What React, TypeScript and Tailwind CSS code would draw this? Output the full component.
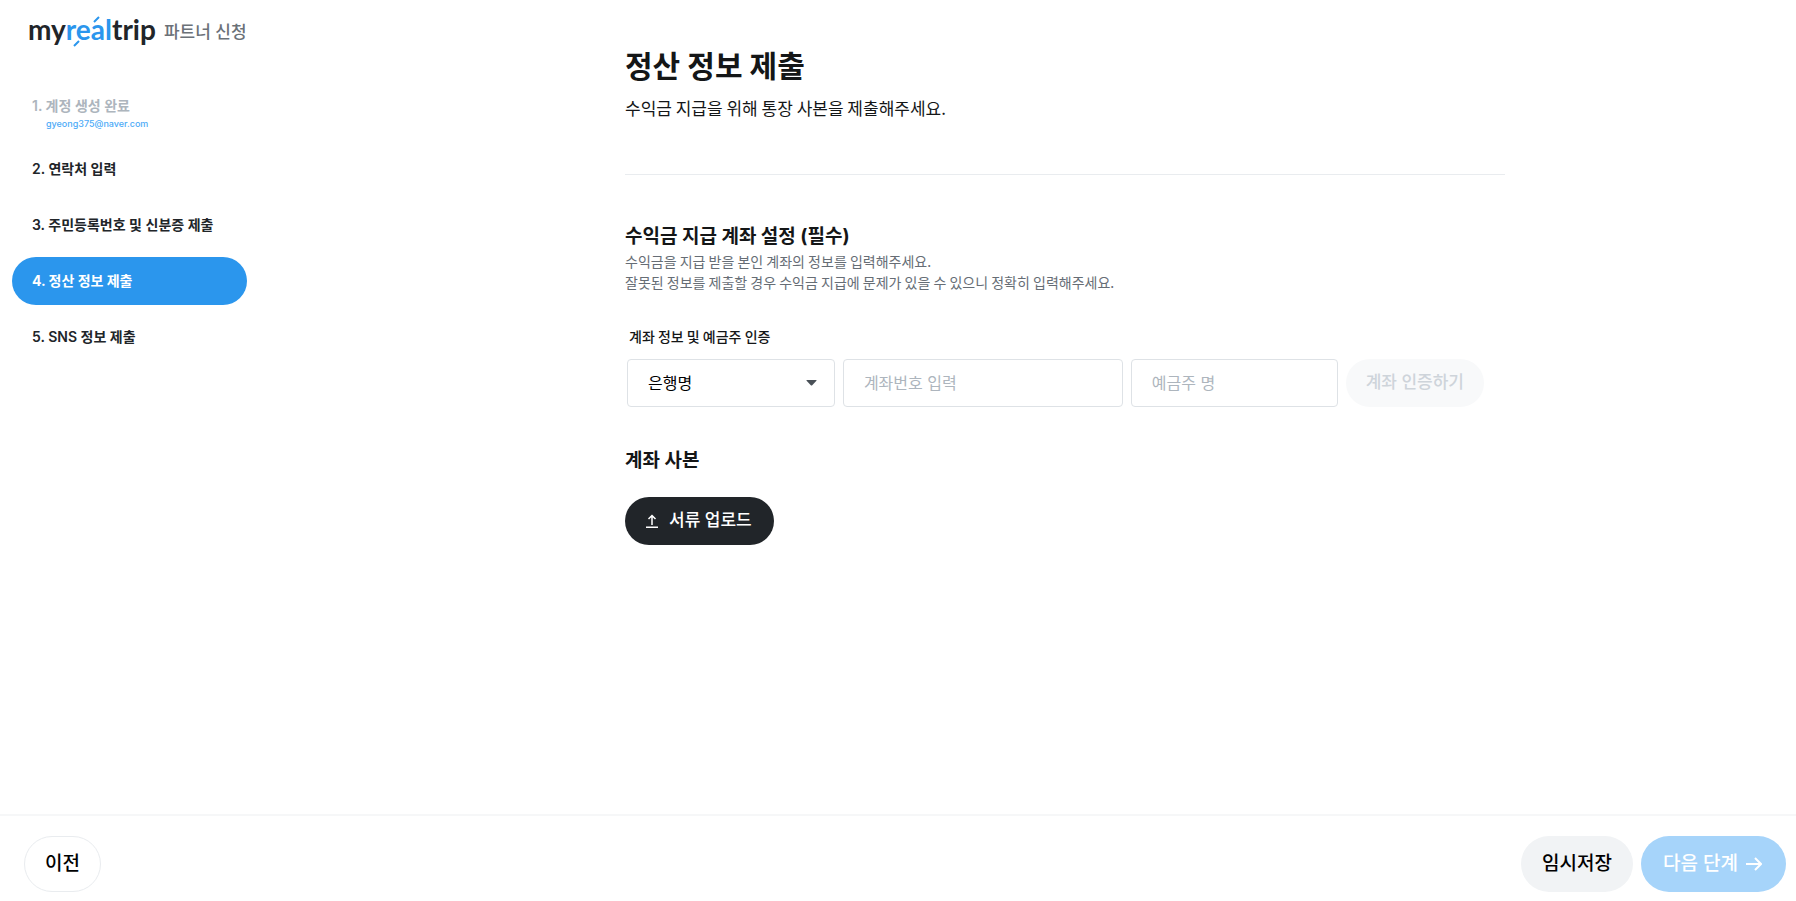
import React, { useState } from "react";

type StepType = {
  title: string;
  email?: string;
};

const steps: StepType[] = [
  { title: "1. 계정 생성 완료", email: "gyeong375@naver.com" },
  { title: "2. 연락처 입력" },
  { title: "3. 주민등록번호 및 신분증 제출" },
  { title: "4. 정산 정보 제출" },
  { title: "5. SNS 정보 제출" },
];

const Logo = () => (
  <a
    href="#"
    aria-label="myrealtrip"
    className="relative font-[Lato,sans-serif] text-[28px] leading-[30px] font-bold text-[#212529]"
  >
    my<span className="text-[#2b96ed]">real</span>trip
    <svg
      className="absolute left-0 top-0 h-9 w-32"
      viewBox="0 0 128 36"
      fill="none"
      stroke="#2b96ed"
      strokeWidth="2"
      aria-hidden="true"
    >
      <path d="M66 8 71 3M46 32 51 27" />
    </svg>
  </a>
);

const Sidebar = () => {
  const [selected, setSelected] = useState<number>(3);

  return (
    <aside className="w-[334px] shrink-0 pl-3">
      <div className="flex items-start gap-2 pl-4 pt-[14px]">
        <Logo />
        <span className="pt-[2px] text-[17px] leading-8 font-medium text-[#6b7178]">파트너 신청</span>
      </div>
      <nav className="mt-[41px] flex w-[235px] flex-col gap-2 text-sm font-semibold">
        {steps.map((step: StepType, index: number) => {
          if (step.email) {
            return (
              <div key={step.title} className="h-12 pt-[7px] pl-5">
                <p className="leading-5 text-[#adb5bd]">{step.title}</p>
                <p className="pl-[14px] text-[9px] leading-4 font-medium text-[#4dabf7]">{step.email}</p>
              </div>
            );
          }
          return (
            <button
              key={step.title}
              type="button"
              onClick={() => setSelected(index)}
              className={
                selected === index
                  ? "h-12 rounded-full bg-[#2b96ed] pl-5 text-left font-bold text-white"
                  : "h-12 rounded-full pl-5 text-left text-[#212529]"
              }
            >
              {step.title}
            </button>
          );
        })}
      </nav>
    </aside>
  );
};

const UploadIcon = () => (
  <svg className="h-4 w-4" viewBox="0 0 16 16" fill="none" stroke="currentColor" strokeWidth="1.5" aria-hidden="true">
    <path d="M1 14.2h12M7 12V3M3.5 6 7 2.5 10.5 6" />
  </svg>
);

const ArrowIcon = () => (
  <svg className="h-4 w-4" viewBox="0 0 16 16" fill="none" stroke="currentColor" strokeWidth="2" aria-hidden="true">
    <path d="M0 8h15M9 2l6 6-6 6" />
  </svg>
);

const fieldStyle =
  "h-12 w-full rounded border border-[#dee2e6] bg-white px-5 text-base outline-none placeholder:text-[#adb5bd]";

const AccountForm = () => (
  <form className="mt-[13px] flex gap-2 pl-[2px] pr-[21px]">
    <div className="relative flex-[208]">
      <select aria-label="은행명" className={`${fieldStyle} appearance-none text-black`}>
        <option>은행명</option>
      </select>
      <svg
        className="pointer-events-none absolute right-[18px] top-[21px] h-[6px] w-[11px]"
        viewBox="0 0 11 6"
        fill="#495057"
        aria-hidden="true"
      >
        <path d="M1 0h9q1 0 .4.8L6.2 5.2q-.7.6-1.4 0L.6.8Q0 0 1 0Z" />
      </svg>
    </div>
    <div className="flex-[280]">
      <input aria-label="계좌번호" placeholder="계좌번호 입력" className={fieldStyle} />
    </div>
    <div className="flex-[207]">
      <input aria-label="예금주 명" placeholder="예금주 명" className={fieldStyle} />
    </div>
    <button
      type="button"
      disabled
      className="h-12 shrink-0 rounded-full bg-[#f8f9fa] px-5 text-[17px] font-medium text-[#ced4da]"
    >
      계좌 인증하기
    </button>
  </form>
);

const Content = () => (
  <main className="flex-1">
    <div className="mx-auto max-w-[880px] text-[#141617]">
      <header className="border-b border-[#e9ecef] pt-[46px] pb-[54px]">
        <h1 className="text-3xl leading-10 font-bold">정산 정보 제출</h1>
        <p className="mt-[10px] font-['Noto_Sans_CJK_KR',sans-serif] text-[17px] leading-6">
          수익금 지급을 위해 통장 사본을 제출해주세요.
        </p>
      </header>
      <section className="mt-12">
        <h2 className="text-[19px] leading-7 font-bold">수익금 지급 계좌 설정 (필수)</h2>
        <p className="font-['Noto_Sans_CJK_KR',sans-serif] text-sm leading-[21px] text-[#666d75]">
          수익금을 지급 받을 본인 계좌의 정보를 입력해주세요.
          <br />
          잘못된 정보를 제출할 경우 수익금 지급에 문제가 있을 수 있으니 정확히 입력해주세요.
        </p>
        <h3 className="mt-[33px] pl-1 font-['Noto_Sans_CJK_KR',sans-serif] text-sm leading-5 font-medium">
          계좌 정보 및 예금주 인증
        </h3>
        <AccountForm />
      </section>
      <section className="mt-10">
        <h2 className="text-[19px] leading-7 font-bold">계좌 사본</h2>
        <button
          type="button"
          className="mt-[22px] flex h-12 items-center gap-2 rounded-full bg-[#212529] pr-[22px] pl-5 text-[17px] font-medium text-white"
        >
          <UploadIcon />
          서류 업로드
        </button>
      </section>
    </div>
  </main>
);

const Footer = () => (
  <footer className="flex items-center gap-2 border-t-2 border-[#f6f7f8] pt-5 pr-[10px] pb-[9px] pl-6 text-[19px] font-medium text-black">
    <button type="button" className="mr-auto h-14 rounded-full border border-[#e9ecef] px-5">
      이전
    </button>
    <button type="button" className="h-14 rounded-full bg-[#f1f3f5] px-[21px]">
      임시저장
    </button>
    <button
      type="button"
      disabled
      className="flex h-14 items-center gap-2 rounded-full bg-[#a6d4fa] pr-6 pl-[22px] text-white"
    >
      다음 단계
      <ArrowIcon />
    </button>
  </footer>
);

const App = () => {
  return (
    <div className="flex min-h-screen flex-col bg-white font-[Inter,'Noto_Sans_CJK_KR',sans-serif]">
      <div className="flex flex-1">
        <Sidebar />
        <Content />
      </div>
      <Footer />
    </div>
  );
};

export default App;
